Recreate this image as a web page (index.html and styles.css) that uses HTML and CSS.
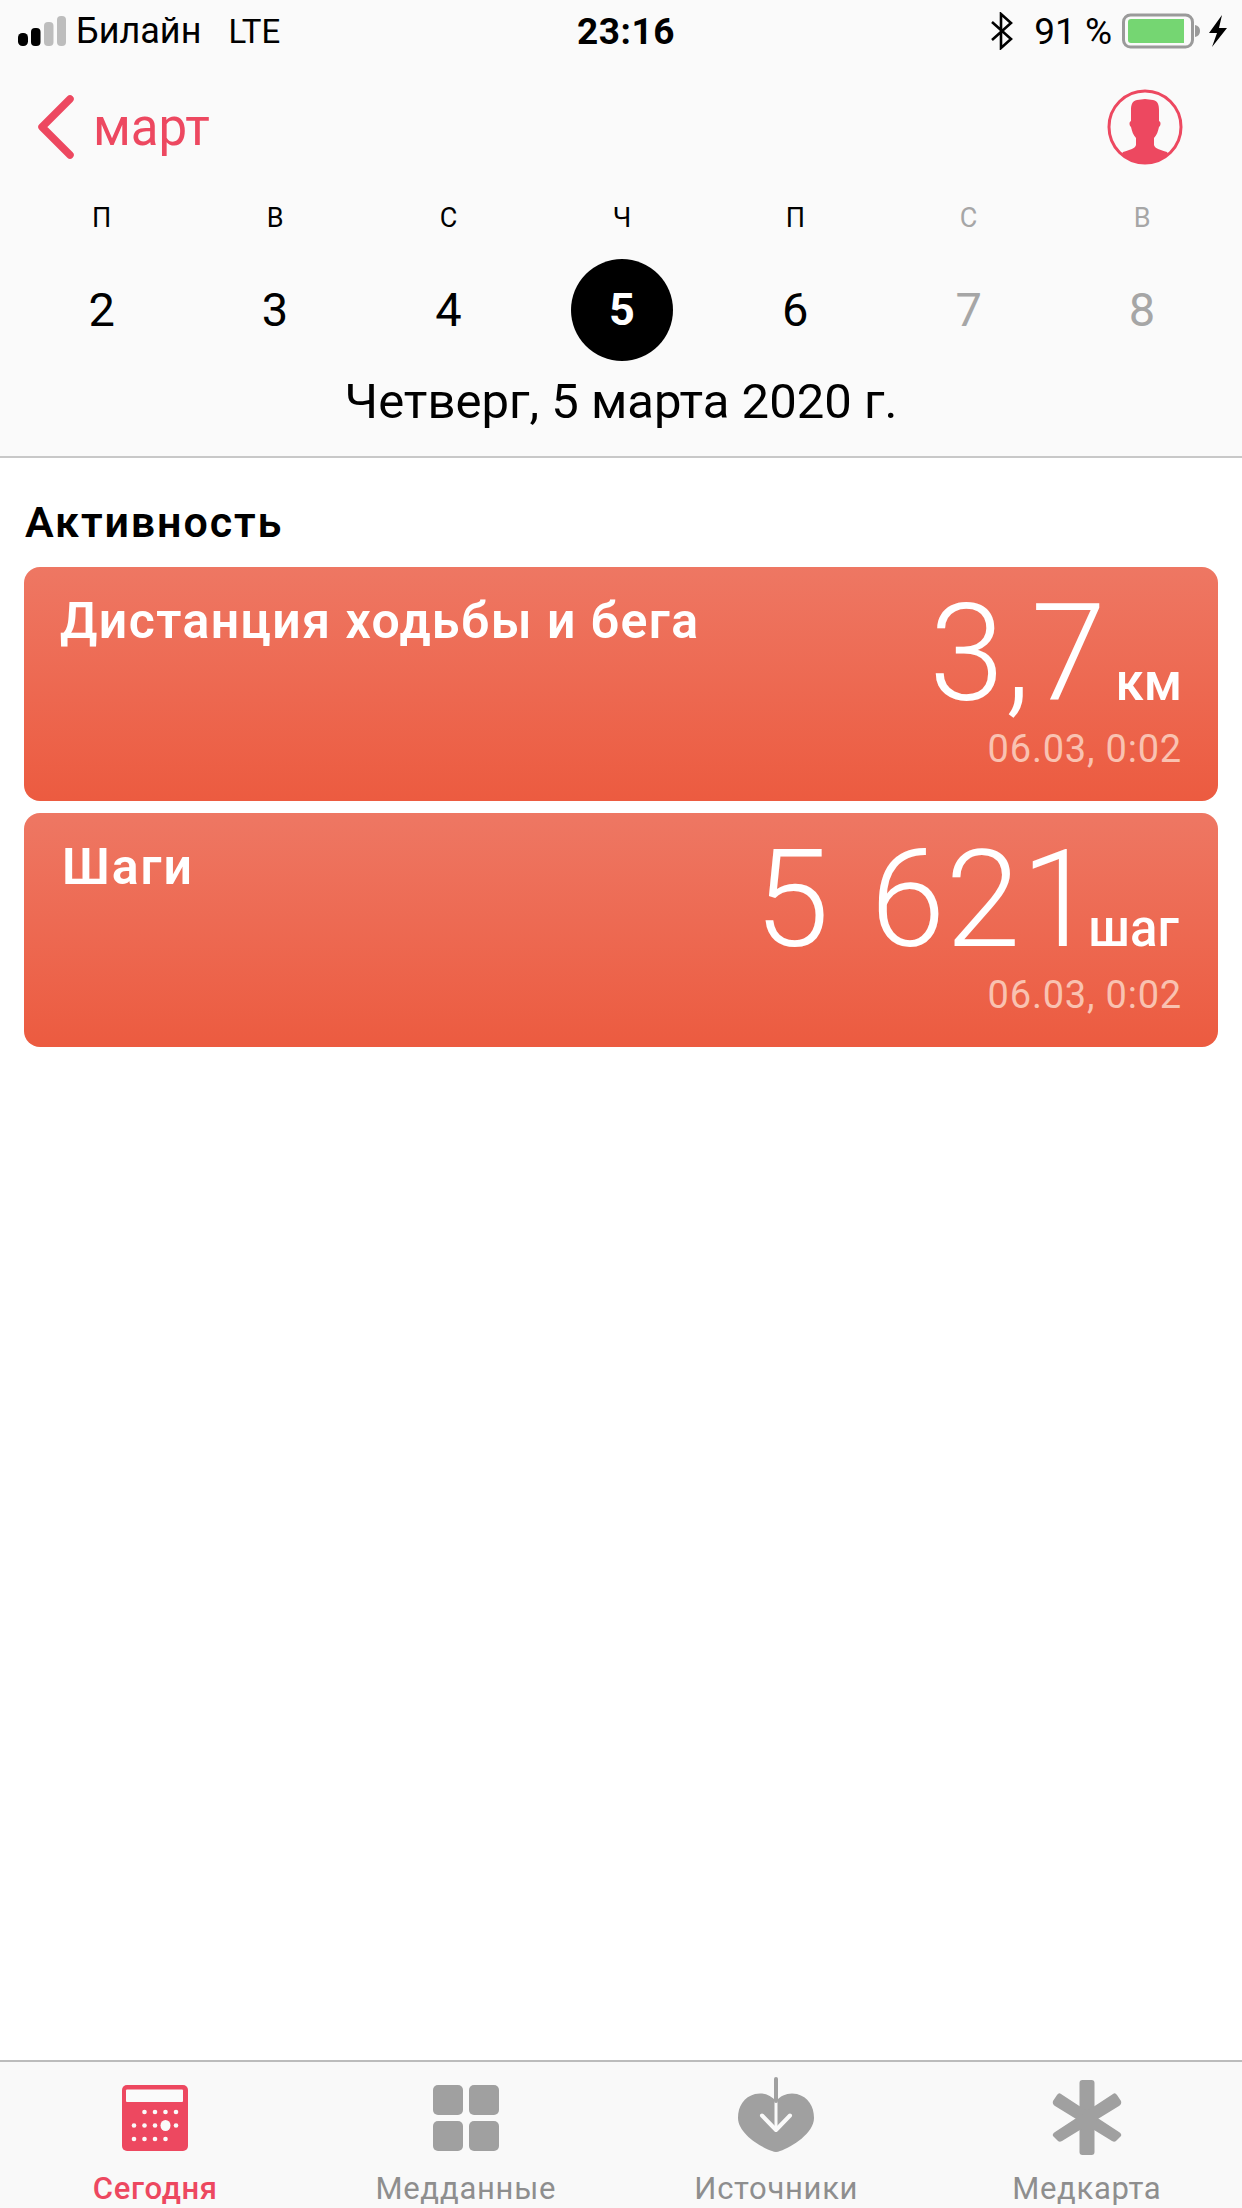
FILE: index.html
```html
<!DOCTYPE html>
<html lang="ru">
<head>
<meta charset="utf-8">
<title>Здоровье</title>
<link rel="stylesheet" href="styles.css">
</head>
<body>
<div class="app">
  <header class="top">
    <div class="status">
      <div class="status-left">
        <svg class="signal" width="48" height="30" viewBox="0 0 48 30"><rect x="0" y="17" width="10" height="13" rx="4.500" fill="#000"/><rect x="13" y="12" width="9.500" height="18" rx="4" fill="#000"/><rect x="26" y="6" width="9.500" height="24" rx="4" fill="#bdbdbd"/><rect x="39" y="0" width="9" height="30" rx="4" fill="#bdbdbd"/></svg>
        <span class="carrier">Билайн</span>
        <span class="net">LTE</span>
      </div>
      <div class="clock">23:16</div>
      <div class="status-right">
        <svg class="bt" width="22" height="38" viewBox="0 0 22 38"><path d="M1 10 L20 27 L10 36 V2 L20 11 L1 28" fill="none" stroke="#000" stroke-width="2.600"/></svg>
        <span class="pct">91 %</span>
        <svg class="batt" width="78" height="36" viewBox="0 0 78 36"><rect x="1.500" y="2" width="69" height="32" rx="7" fill="none" stroke="#9a9a9a" stroke-width="3"/><path d="M6 9 a3 3 0 0 1 3-3 H62 V30 H9 a3 3 0 0 1-3-3 Z" fill="#75d672"/><path d="M73 12 q5 1 5 6 t-5 6 Z" fill="#9a9a9a"/></svg>
        <svg class="bolt" width="18" height="32" viewBox="0 0 18 32"><path d="M13 0 L0 18 H8 L3 32 L18 13 H10 Z" fill="#000"/></svg>
      </div>
    </div>
    <div class="nav">
      <div class="back">
        <svg class="chev" width="37" height="64" viewBox="0 0 37 64"><path d="M32 4 L4 32 L32 60" fill="none" stroke="#ed4860" stroke-width="7.500" stroke-linecap="round" stroke-linejoin="round"/></svg>
        <span class="month">март</span>
      </div>
      <svg class="avatar" width="76" height="76" viewBox="0 0 76 76">
        <defs><clipPath id="avatar-clip"><circle cx="38" cy="38" r="36"/></clipPath></defs>
        <circle cx="38" cy="38" r="36" fill="#fafafa" stroke="#ed4860" stroke-width="3"/>
        <path clip-path="url(#avatar-clip)" d="M38 10 L46 11 C51 12 52 16 52 21 L52 32 C54 33 54 36 52 38 C51 42 50 46 47 49 L47 56 C48 59 50 60 60 63 L68 76 H8 L16 63 C26 60 28 59 29 56 L29 49 C26 46 25 42 24 38 C22 36 22 33 24 32 L24 21 C24 16 25 12 30 11 Z" fill="#ed4860"/>
      </svg>
    </div>
    <div class="week">
      <div class="day"><span class="dow">П</span><span class="num">2</span></div>
      <div class="day"><span class="dow">В</span><span class="num">3</span></div>
      <div class="day"><span class="dow">С</span><span class="num">4</span></div>
      <div class="day"><span class="dow">Ч</span><span class="num today">5</span></div>
      <div class="day"><span class="dow">П</span><span class="num">6</span></div>
      <div class="day off"><span class="dow">С</span><span class="num">7</span></div>
      <div class="day off"><span class="dow">В</span><span class="num">8</span></div>
    </div>
    <div class="date">Четверг, 5 марта 2020 г.</div>
  </header>

  <main class="content">
    <h2 class="section">Активность</h2>
    <section class="card">
      <div class="card-title">Дистанция ходьбы и бега</div>
      <div class="card-data">
        <div class="reading"><span class="value">3,7</span><span class="unit unit-km">км</span></div>
        <div class="stamp">06.03, 0:02</div>
      </div>
    </section>
    <section class="card">
      <div class="card-title card-title-steps">Шаги</div>
      <div class="card-data">
        <div class="reading"><span class="value">5 621</span><span class="unit unit-steps">шаг</span></div>
        <div class="stamp">06.03, 0:02</div>
      </div>
    </section>
  </main>

  <nav class="tabs">
    <div class="tab active">
      <svg class="tab-icon" width="66" height="66" viewBox="0 0 66 66">
        <rect width="66" height="66" rx="5" fill="#ed4860"/>
        <rect x="4" y="4.500" width="57" height="12.500" rx="1" fill="#fafafa"/>
        <g fill="#fafafa"><circle cx="22.500" cy="27" r="2.300"/><circle cx="33" cy="27" r="2.300"/><circle cx="43.500" cy="27" r="2.300"/><circle cx="54" cy="27" r="2.300"/>
        <circle cx="12" cy="40.500" r="2.300"/><circle cx="22.500" cy="40.500" r="2.300"/><circle cx="33" cy="40.500" r="2.300"/><ellipse cx="43.500" cy="40.500" rx="5" ry="5.500"/><circle cx="54" cy="40.500" r="2.300"/>
        <circle cx="12" cy="54" r="2.300"/><circle cx="22.500" cy="54" r="2.300"/><circle cx="33" cy="54" r="2.300"/><circle cx="43.500" cy="54" r="2.300"/></g>
      </svg>
      <span class="tab-label">Сегодня</span>
    </div>
    <div class="tab">
      <svg class="tab-icon" width="66" height="66" viewBox="0 0 66 66" fill="#a0a0a0">
        <rect width="30" height="30" rx="5"/><rect x="36" width="30" height="30" rx="5"/><rect y="36" width="30" height="30" rx="5"/><rect x="36" y="36" width="30" height="30" rx="5"/>
      </svg>
      <span class="tab-label">Медданные</span>
    </div>
    <div class="tab">
      <svg class="tab-icon icon-heart" width="76" height="75" viewBox="0 0 76 75">
        <path d="M38 24 C33 18 25 15 17 17 C6 20 0 29 0 41 C0 56 22 70 34 74 Q38 76 42 74 C54 70 76 56 76 41 C76 29 70 20 59 17 C51 15 43 18 38 24 Z" fill="#a0a0a0"/>
        <path d="M24 38.500 L38 53 L52 38.500" fill="none" stroke="#fafafa" stroke-width="4" stroke-linecap="round" stroke-linejoin="round"/>
        <path d="M38 24 V52" stroke="#fafafa" stroke-width="3"/>
        <path d="M38 2 V24" stroke="#a0a0a0" stroke-width="4" stroke-linecap="round"/>
      </svg>
      <span class="tab-label">Источники</span>
    </div>
    <div class="tab">
      <svg class="tab-icon icon-star" width="70" height="75" viewBox="0 0 70 75" fill="#a0a0a0">
        <rect x="27.500" y="0" width="15" height="75" rx="3"/>
        <path d="M9 14 L67 52 Q70 54 69 56 L65 60 Q63 63 60 61 L3 26 Q0 24 1 21 L5 15 Q7 12 9 14 Z"/>
        <path d="M61 14 L3 52 Q0 54 1 56 L5 60 Q7 63 10 61 L67 26 Q70 24 69 21 L65 15 Q63 12 61 14 Z"/>
      </svg>
      <span class="tab-label">Медкарта</span>
    </div>
  </nav>
</div>
</body>
</html>
```
FILE: styles.css
```css
* { box-sizing: border-box; }
html, body { margin: 0; padding: 0; }
body { font-family: Roboto, "Noto Sans", sans-serif; background: #fff; color: #000; }
.app { width: 1242px; height: 2208px; display: flex; flex-direction: column; overflow: hidden; }

.top { height: 458px; background: #fafafa; border-bottom: 2px solid #c8c8c8; display: flex; flex-direction: column; }
.status { height: 60px; display: flex; align-items: center; justify-content: space-between; padding: 2px 15px 0 18px; }
.status-left { display: flex; align-items: center; width: 407px; }
.signal { margin-right: 10px; }
.carrier { font-size: 36px; }
.net { font-size: 33px; margin-left: 27px; }
.clock { font-size: 37px; font-weight: 700; letter-spacing: 0.5px; }
.status-right { display: flex; align-items: center; justify-content: flex-end; width: 400px; }
.bt { margin-right: 21px; }
.pct { font-size: 37px; margin-right: 10px; }
.bolt { margin-left: 9px; }

.nav { height: 76px; margin-top: 29px; display: flex; align-items: center; justify-content: space-between; padding: 0 59px 0 38px; }
.back { display: flex; align-items: center; }
.chev { margin-right: 18px; }
.month { font-size: 51px; color: #ed4860; }

.week { display: grid; grid-template-columns: repeat(7, 173.400px); padding: 0 0 0 15px; margin-top: 33px; }
.day { display: flex; flex-direction: column; align-items: center; }
.dow { font-size: 27px; height: 40px; line-height: 40px; }
.num { font-size: 47px; width: 102px; height: 102px; line-height: 102px; margin-top: 21px; text-align: center; border-radius: 50%; }
.num.today { background: #000; color: #fff; font-weight: 700; font-size: 45px; }
.day.off { color: #a6a6a6; }
.date { font-size: 49px; text-align: center; margin-top: 13px; line-height: 56px; }

.content { flex: 1; padding: 0 24px; display: flex; flex-direction: column; }
.section { margin: 40px 0 0 1px; font-size: 43px; font-weight: 600; letter-spacing: 1.900px; line-height: 48px; height: 69px; }
.card { height: 234px; border-radius: 16px; background: linear-gradient(#ee7763, #ec5b40); color: #fff; display: flex; justify-content: space-between; padding: 24px 36px 0 36px; margin-bottom: 12px; }
.card-title { font-size: 50px; font-weight: 600; line-height: 54px; letter-spacing: 1.450px; padding-top: 3px; }
.card-title-steps { margin-left: 2px; letter-spacing: 2px; }
.card-data { display: flex; flex-direction: column; align-items: flex-end; margin-top: -3px; }
.reading { display: flex; align-items: baseline; height: 132px; }
.value { font-size: 135px; font-weight: 300; line-height: 132px; letter-spacing: 0.500px; word-spacing: 7px; }
.unit { font-size: 51px; font-weight: 500; }
.unit-km { margin-left: 9px; }
.unit-steps { margin: 0 3px 0 -8px; }
.stamp { font-size: 38px; color: #f9c2b1; line-height: 44px; margin-top: 7px; letter-spacing: 0.800px; }

.tabs { height: 148px; background: #f9f9f9; border-top: 2px solid #bcbcbc; display: grid; grid-template-columns: repeat(4, 1fr); }
.tab { display: flex; flex-direction: column; align-items: center; position: relative; padding-top: 23px; }
.tab-icon { display: block; }
.icon-heart { margin-top: -8px; }
.icon-star { margin-top: -5px; }
.tab-label { position: absolute; top: 109px; font-size: 31px; line-height: 36px; color: #8e8e8e; letter-spacing: 0.700px; white-space: nowrap; }
.tab.active .tab-label { color: #ed4860; font-weight: 500; }
```
